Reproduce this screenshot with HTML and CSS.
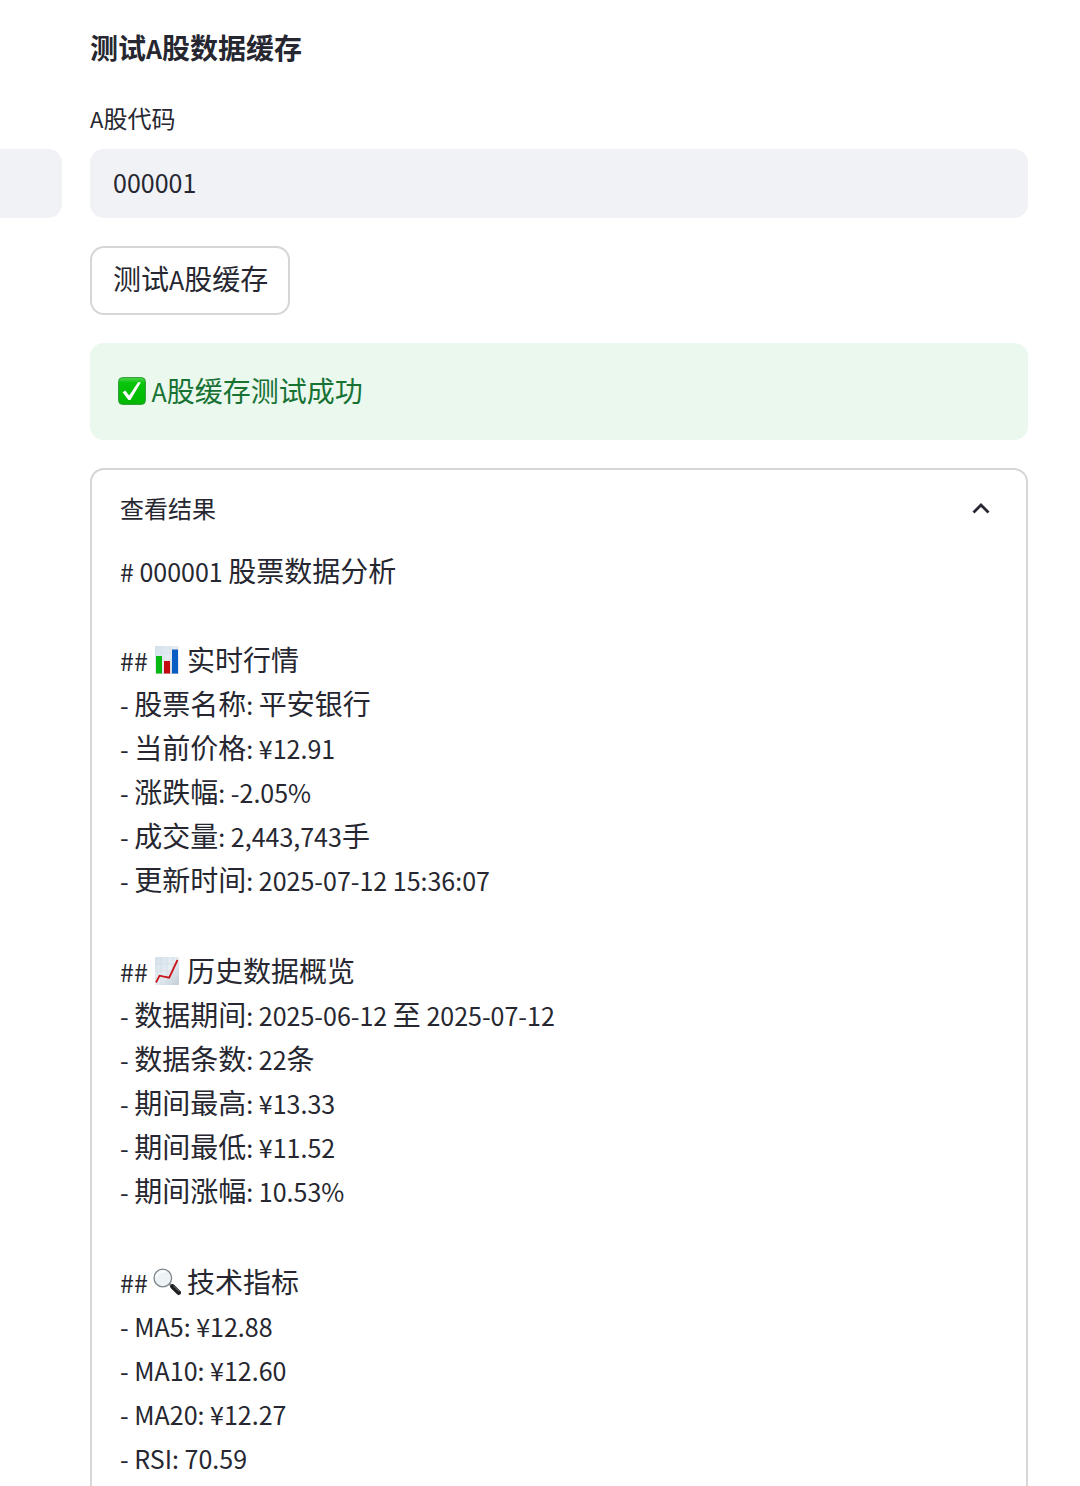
FILE: index.html
```html
<!DOCTYPE html>
<html lang="zh-CN">
<head>
    <meta charset="UTF-8">
    <meta name="viewport" content="width=device-width, initial-scale=1.0">
    <title>测试A股数据缓存</title>
    <link rel="stylesheet" href="styles.css">
</head>
<body>
    <main class="cache-page">
        <h4 class="title"><span class="zh">测试</span>A<span class="zh">股数据缓存</span></h4>

        <label class="field-label" for="code">A<span class="zh">股代码</span></label>
        <input class="text-input side-input" type="text" aria-label="股票代码">
        <input class="text-input code-input" type="text" id="code" value="000001">

        <section class="results">
            <button class="test-btn" type="button"><span class="zh">测试</span>A<span class="zh">股缓存</span></button>

            <div class="alert" role="status">
                <svg class="emoji" viewBox="0 0 28 28" aria-hidden="true">
                    <defs>
                        <linearGradient id="green" x1="0" y1="0" x2="0" y2="1">
                            <stop offset="0" stop-color="#4fd64d"/>
                            <stop offset=".2" stop-color="#08c40a"/>
                            <stop offset="1" stop-color="#00b800"/>
                        </linearGradient>
                    </defs>
                    <rect x=".6" y=".6" width="26.8" height="26.8" rx="4" fill="url(#green)" stroke="#2d9a35"/>
                    <path d="M4.6 15.2l2.6-1.6 4 4.8L20 5.2h3L12.4 23h-2z" fill="#fff"/>
                </svg>
                A<span class="zh">股缓存测试成功</span>
            </div>

            <details class="expander" open>
                <summary>
                    <span>查看结果</span>
                    <svg class="chevron" viewBox="0 0 20 14" aria-hidden="true">
                        <path d="M2.5 11.5L10 4l7.5 7.5" fill="none" stroke="#262730" stroke-width="2.8"/>
                    </svg>
                </summary>
                <div class="report">
                    <p class="report-title"># 000001 <span class="zh">股票数据分析</span></p>
                    <p>
                        ##
                        <svg class="emoji" viewBox="0 0 28 28" aria-hidden="true">
                            <defs>
                                <linearGradient id="paper" x1="0" y1="0" x2="1" y2="1">
                                    <stop offset="0" stop-color="#d3e0ea"/>
                                    <stop offset=".5" stop-color="#e6edf2"/>
                                    <stop offset="1" stop-color="#c3cdd6"/>
                                </linearGradient>
                            </defs>
                            <rect x="2" y="0" width="23.5" height="28" fill="url(#paper)"/>
                            <path d="M2 7h23M2 14h23M2 21h23M8 0v28M17 0v28" stroke="#d5dfe7" stroke-width=".5"/>
                            <rect x="3" y="10" width="6" height="17.5" fill="#08b812"/>
                            <rect x="11" y="15" width="6" height="12.5" fill="#c40a10"/>
                            <rect x="19" y="3.5" width="6" height="24" fill="#0a5cc5"/>
                        </svg>
                        <span class="zh">实时行情</span><br>
                        - <span class="zh">股票名称</span>: <span class="zh">平安银行</span><br>
                        - <span class="zh">当前价格</span>: ¥12.91<br>
                        - <span class="zh">涨跌幅</span>: -2.05%<br>
                        - <span class="zh">成交量</span>: 2,443,743<span class="zh">手</span><br>
                        - <span class="zh">更新时间</span>: 2025-07-12 15:36:07
                    </p>
                    <p>
                        ##
                        <svg class="emoji" viewBox="0 0 28 28" aria-hidden="true">
                            <rect x="2" y="0" width="24" height="28" fill="url(#paper)"/>
                            <path d="M2 7h24M2 14h24M2 21h24M8 0v28M14 0v28M20 0v28" stroke="#c9d5df" stroke-width=".5"/>
                            <path d="M3 25.5l3.5-6.8 9.7 2L24.5 3" fill="none" stroke="#c9151b" stroke-width="1.8"/>
                        </svg>
                        <span class="zh">历史数据概览</span><br>
                        - <span class="zh">数据期间</span>: 2025-06-12 <span class="zh">至</span> 2025-07-12<br>
                        - <span class="zh">数据条数</span>: 22<span class="zh">条</span><br>
                        - <span class="zh">期间最高</span>: ¥13.33<br>
                        - <span class="zh">期间最低</span>: ¥11.52<br>
                        - <span class="zh">期间涨幅</span>: 10.53%
                    </p>
                    <p>
                        ##
                        <svg class="emoji" viewBox="0 0 28 28" aria-hidden="true">
                            <path d="M16.5 16l3 2.5" stroke="#8a9096" stroke-width="2.5"/>
                            <path d="M19.5 18.5l6.2 6.2" stroke="#1c1e20" stroke-width="4.6" stroke-linecap="round"/>
                            <path d="M20.5 18l5.8 5.5" stroke="#777c80" stroke-width="1"/>
                            <circle cx="9.8" cy="10" r="8.8" fill="#edf2f5" stroke="#7d868d" stroke-width="1.3"/>
                            <path d="M3.5 8.5a6.8 6.8 0 0 1 9-4.5" fill="none" stroke="#fff" stroke-width="1.6"/>
                        </svg>
                        <span class="zh">技术指标</span><br>
                        - MA5: ¥12.88<br>
                        - MA10: ¥12.60<br>
                        - MA20: ¥12.27<br>
                        - RSI: 70.59
                    </p>
                </div>
            </details>
        </section>
    </main>
</body>
</html>
```
FILE: styles.css
```css
* {
    box-sizing: border-box;
}

body {
    margin: 0;
    background-color: #fff;
    color: #262730;
    font-family: "Noto Sans CJK SC", sans-serif;
    font-size: 25px;
    line-height: 44px;
}

.cache-page {
    display: grid;
    grid-template-columns: 62px 1fr;
    grid-template-rows: auto auto auto 1fr;
    column-gap: 28px;
    min-height: 100vh;
    padding: 27px 52px 0 0;
}

/* Chinese glyphs are set a little larger than latin ones */
.zh {
    font-size: 28px;
    line-height: 1;
}

.title {
    grid-column: 2;
    margin: 0 0 30px;
    font-size: 25px;
    font-weight: 700;
    line-height: 42px;
}

.field-label {
    grid-column: 2;
    margin-bottom: 12px;
    font-size: 22px;
    line-height: 38px;
}

.field-label .zh {
    font-size: 24px;
}

.text-input {
    width: 100%;
    min-width: 0;
    height: 69px;
    padding: 0 23px 4px;
    border: none;
    border-radius: 14px;
    background-color: #f0f2f6;
    color: #262730;
    font-family: inherit;
    font-size: 25px;
}

.side-input {
    grid-column: 1;
    border-radius: 0 14px 14px 0;
}

.code-input {
    grid-column: 2;
}

.results {
    grid-column: 2;
    display: flex;
    flex-direction: column;
    gap: 28px;
    padding-top: 28px;
}

.test-btn {
    align-self: flex-start;
    height: 69px;
    padding: 0 20px 4px 21px;
    border: 2px solid #d6d6d8;
    border-radius: 14px;
    background-color: #fff;
    color: #262730;
    font-family: inherit;
    font-size: 25px;
    cursor: pointer;
}

.alert {
    padding: 26px 28px 27px;
    border-radius: 14px;
    background-color: #eaf8ee;
    color: #177233;
}

.emoji {
    width: 28px;
    height: 28px;
    vertical-align: -3px;
}

.expander {
    flex: 1;
    border: 2px solid #d6d6d8;
    border-bottom: none;
    border-radius: 14px 14px 0 0;
    padding: 0 28px;
}

summary {
    display: flex;
    align-items: center;
    justify-content: space-between;
    height: 76px;
    font-size: 24px;
    cursor: pointer;
    list-style: none;
}

.chevron {
    width: 20px;
    height: 14px;
    margin-right: 7px;
}

.report {
    padding-top: 3px;
}

.report p {
    margin: 0 0 47px;
}

.report .report-title {
    margin-bottom: 45px;
}

.report p:last-child {
    margin-bottom: 0;
}
```
